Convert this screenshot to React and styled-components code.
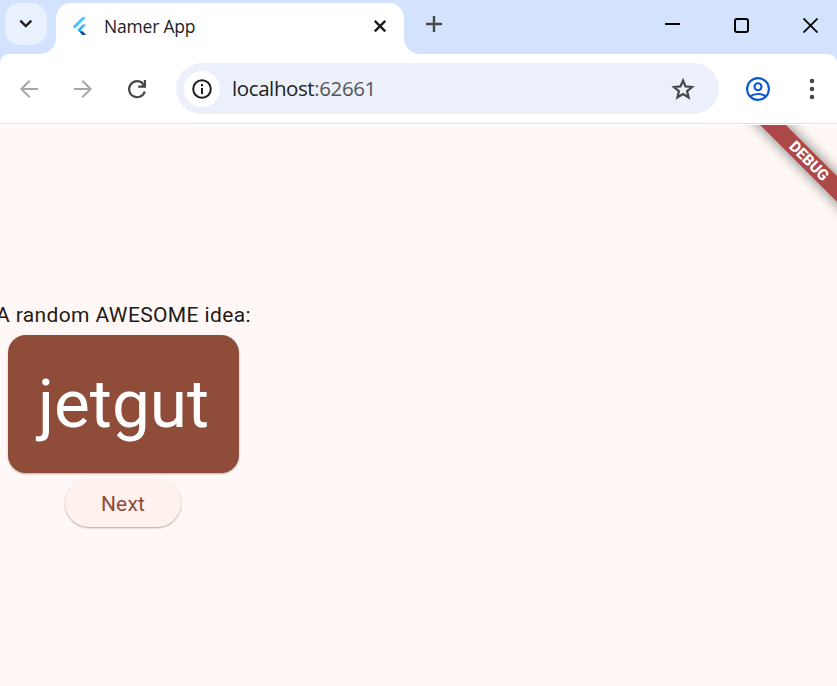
import React from "react";
import styled, { createGlobalStyle } from "styled-components";

const GlobalStyle = createGlobalStyle`
  * { box-sizing: border-box; }
  body { margin: 0; overflow: hidden; }
`;

const Browser = styled.div`
  display: flex;
  flex-direction: column;
  width: 837px;
  height: 686px;
  overflow: hidden;
  background: #d3e3fd;
  font-family: "Open Sans", "Noto Sans", sans-serif;
`;

const TabStrip = styled.header`
  display: flex;
  height: 54px;
  padding: 3px 0 0 5px;
  background: #d3e3fd;
`;

const TabSearch = styled.button`
  display: grid;
  place-items: center;
  width: 42px;
  height: 42px;
  padding: 0;
  border: 0;
  border-radius: 15px;
  background: #e9f1fe;
`;

const Tab = styled.div`
  position: relative;
  display: flex;
  align-items: center;
  width: 348px;
  height: 51px;
  margin-left: 9px;
  padding: 0 17px 5px 15px;
  border-radius: 15px 15px 0 0;
  background: #fff;

  &::before,
  &::after {
    content: "";
    position: absolute;
    bottom: 0;
    width: 16px;
    height: 16px;
  }
  &::before {
    right: 100%;
    background: radial-gradient(circle at 0 0, transparent 15.5px, #fff 16.3px);
  }
  &::after {
    left: 100%;
    background: radial-gradient(circle at 100% 0, transparent 15.5px, #fff 16.3px);
  }
`;

const TabTitle = styled.span`
  flex: 1;
  margin-left: 15px;
  padding-bottom: 1px;
  font-size: 17.5px;
  letter-spacing: -0.2px;
  line-height: 24px;
  color: #202124;
`;

const NewTab = styled.div`
  margin: 13px 0 0 22px;
  height: 16px;
  line-height: 0;
`;

const WindowControls = styled.div`
  display: flex;
  align-items: center;
  gap: 54px;
  height: 44px;
  margin: 0 19px 0 auto;
`;

const Toolbar = styled.nav`
  display: flex;
  align-items: center;
  flex: none;
  height: 71px;
  padding: 0 14px 1px 17px;
  border-radius: 9px 9px 0 0;
  border-bottom: 1px solid #fff;
  background: #fff;
  box-shadow: inset 0 -1px #dde1e1;
`;

const NavButtons = styled.div`
  display: flex;
  gap: 30px;
  width: 159px;
`;

const AddressBar = styled.div`
  display: flex;
  align-items: center;
  width: 543px;
  height: 51px;
  padding: 0 24px 0 8px;
  border-radius: 26px;
  background: #ecf0fa;
`;

const SiteInfo = styled.div`
  display: grid;
  place-items: center;
  width: 36px;
  height: 36px;
  border-radius: 50%;
  background: #fff;
`;

const Url = styled.span`
  flex: 1;
  margin-left: 12px;
  padding-bottom: 2px;
  font-size: 20.5px;
  letter-spacing: -0.4px;
  line-height: 28px;
  color: #202124;
`;

const Port = styled.span`
  color: #54575b;
`;

const ToolbarEnd = styled.div`
  display: flex;
  align-items: center;
  justify-content: space-between;
  width: 74px;
  margin: 0 3px 0 auto;
`;

const Page = styled.main`
  position: relative;
  flex: 1;
  overflow: hidden;
  background: #fff8f6;
  font-family: Roboto, sans-serif;
`;

const IdeaColumn = styled.section`
  display: flex;
  flex-direction: column;
  align-items: center;
  width: 255px;
  margin-left: -4px;
  padding-top: 175px;
`;

const Prompt = styled.p`
  margin: 0;
  font-size: 21px;
  letter-spacing: 0.38px;
  line-height: 30px;
  white-space: nowrap;
  color: #231917;
`;

const WordCard = styled.div`
  display: grid;
  place-items: center;
  width: 231px;
  height: 138px;
  margin: 5px 0 6px;
  border-radius: 18px;
  background: #8f4c38;
  box-shadow: 0 1px 2px rgba(0, 0, 0, 0.3);
  color: #fff;
  font-size: 67.5px;
  line-height: 78px;
`;

const NextButton = styled.button`
  width: 116px;
  height: 48px;
  margin-right: 1px;
  padding: 1px 0 0;
  border: 0;
  border-radius: 24px;
  background: #fff1ed;
  box-shadow: 0 1px 2px rgba(0, 0, 0, 0.32);
  color: #8f4c38;
  font: 400 21px/30px Roboto, sans-serif;
  letter-spacing: 0.15px;
`;

const DebugBanner = styled.div`
  position: absolute;
  top: 27px;
  right: -52px;
  width: 160px;
  height: 18px;
  transform: rotate(45deg);
  background: #ac4848;
  box-shadow: 0 0 14px rgba(0, 0, 0, 0.55);
  color: #fff;
  font-size: 15.3px;
  font-weight: 800;
  line-height: 18px;
  text-align: center;
`;

function Icon({ size = 24, width = size, height = size, box = `0 0 ${width} ${height}`, children, ...rest }) {
  return (
    <svg width={width} height={height} viewBox={box} fill="none" {...rest}>
      {children}
    </svg>
  );
}

const FlutterLogo = () => (
  <Icon width={18} height={20}>
    <path d="M1.8 10.5 11.2 1.2H15L3.8 12.5Z" fill="#40c4ff" />
    <path d="M6.3 13.9 11.7 8.6H15.2L9.9 13.9 12 16H8.3Z" fill="#29b6f6" />
    <path d="M8.2 15.6h3.6l3.4 3.3h-3.7Z" fill="#01479b" />
  </Icon>
);

export default function App() {
  return (
    <Browser>
      <GlobalStyle />
      <TabStrip>
        <TabSearch aria-label="Search tabs">
          <Icon width={14} height={10} stroke="#1f1f1f" strokeWidth="2.4">
            <path d="m1.3 1.7 5.5 5.4 5.5-5.4" />
          </Icon>
        </TabSearch>
        <Tab>
          <FlutterLogo />
          <TabTitle>Namer App</TabTitle>
          <Icon size={14} stroke="#1f1f1f" strokeWidth="2.5">
            <path d="m1.8 1.8 10.5 10.5M12.3 1.8 1.8 12.3" />
          </Icon>
        </Tab>
        <NewTab>
          <Icon size={16} stroke="#474747" strokeWidth="2.4">
            <path d="M8 0v16M0 8h16" />
          </Icon>
        </NewTab>
        <WindowControls>
          <Icon width={15} height={16} stroke="#000" strokeWidth="2">
            <path d="M0 7h15" />
          </Icon>
          <Icon size={15} stroke="#000" strokeWidth="2">
            <rect x="1" y="1" width="13" height="13" rx="2" />
          </Icon>
          <Icon size={15} stroke="#000" strokeWidth="1.8">
            <path d="m.5.5 14 14m0-14-14 14" />
          </Icon>
        </WindowControls>
      </TabStrip>
      <Toolbar>
        <NavButtons>
          <Icon stroke="#a7a7a7" strokeWidth="2">
            <path d="M21 12H4.5m8.2-8.3L4.4 12l8.3 8.3" />
          </Icon>
          <Icon stroke="#a7a7a7" strokeWidth="2">
            <path d="M3 12h16.5m-8.2-8.3 8.3 8.3-8.3 8.3" />
          </Icon>
          <Icon stroke="#474747" strokeWidth="2.2">
            <path d="M19.8 14.5A8 8 0 1 1 18.2 7" />
            <path d="M21 3v7.8h-7.8V8.6h3.3l2.3-2.3V3Z" fill="#474747" stroke="none" />
          </Icon>
        </NavButtons>
        <AddressBar>
          <SiteInfo>
            <Icon size={20} stroke="#1f1f1f" strokeWidth="2">
              <circle cx="10" cy="10" r="8.8" />
              <path d="M10 9v6M10 5v2.2" />
            </Icon>
          </SiteInfo>
          <Url>localhost<Port>:62661</Port></Url>
          <Icon stroke="#474747" strokeWidth="2.2">
            <path d="m12 3.5 2.5 5.9 6.5.6-4.9 4.2 1.5 6.3-5.6-3.4-5.6 3.4 1.5-6.3L3 10l6.5-.6Z" />
          </Icon>
        </AddressBar>
        <ToolbarEnd>
          <Icon stroke="#0b57d0" strokeWidth="2.1">
            <circle cx="12" cy="12" r="10.9" />
            <circle cx="12" cy="9.7" r="3.5" />
            <path d="M4.2 19.4c4.4-3.2 11.2-3.2 15.6 0" />
          </Icon>
          <Icon width={22} height={24} fill="#474747">
            <circle cx="14" cy="4" r="2.3" />
            <circle cx="14" cy="12" r="2.3" />
            <circle cx="14" cy="20" r="2.3" />
          </Icon>
        </ToolbarEnd>
      </Toolbar>
      <Page>
        <IdeaColumn>
          <Prompt>A random AWESOME idea:</Prompt>
          <WordCard>jetgut</WordCard>
          <NextButton>Next</NextButton>
        </IdeaColumn>
        <DebugBanner>DEBUG</DebugBanner>
      </Page>
    </Browser>
  );
}
